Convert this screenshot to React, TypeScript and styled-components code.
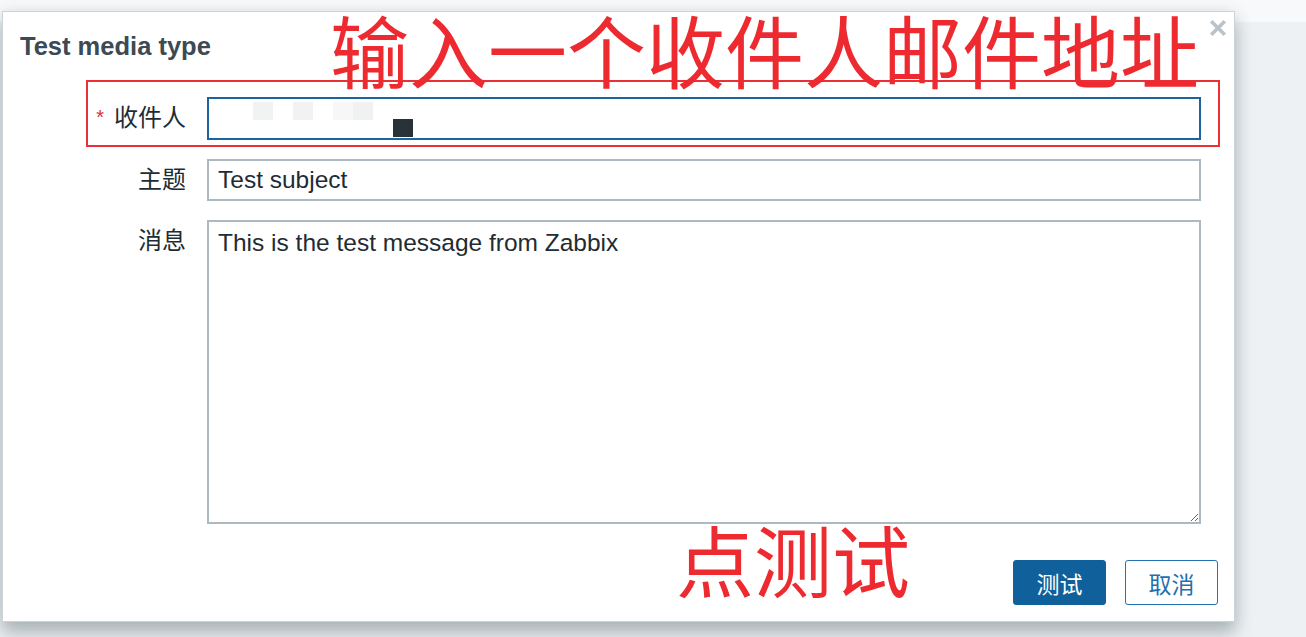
import styled, { createGlobalStyle } from "styled-components";

const GlobalStyle = createGlobalStyle`
  html, body {
    margin: 0;
    padding: 0;
    background: #eef1f3;
    font-family: "Liberation Sans", "Noto Sans CJK SC", Arial, sans-serif;
  }
`;

const CJK = `"Liberation Sans", "Noto Sans CJK SC", sans-serif`;

export default function App() {
  return (
    <>
      <GlobalStyle />
      <Page>
        <TopBar />
        <Dialog>
          <Header>
            <Title>Test media type</Title>
            <Close aria-label="close">
              <svg width="16" height="16" viewBox="0 0 16 16">
                <path d="M2.5 2.5 L13.5 13.5 M13.5 2.5 L2.5 13.5" stroke="#b9c3c9" strokeWidth="3.6" strokeLinecap="square" />
              </svg>
            </Close>
          </Header>

          <Form>
            <Label>
              <Req>*</Req>收件人
            </Label>
            <Field $focused>
              <Blot $w={20} $left={44} $top={3} $tone="#f1f2f2" />
              <Blot $w={20} $left={20} $top={3} $tone="#f1f2f2" />
              <Blot $w={20} $left={20} $top={3} $tone="#f7f7f7" />
              <Blot $w={20} $left={0} $top={3} $tone="#f0f1f1" />
              <Blot $w={20} $left={20} $top={20} $tone="#283339" />
            </Field>

            <Label>主题</Label>
            <Field>Test subject</Field>

            <Label>消息</Label>
            <Message readOnly defaultValue="This is the test message from Zabbix" />
          </Form>

          <Footer>
            <Button $primary>测试</Button>
            <Button>取消</Button>
          </Footer>

          <Highlight />
          <Note $left={327} $top={-3} $size={79}>输入一个收件人邮件地址</Note>
          <Note $left={673} $top={507} $size={78}>点测试</Note>
        </Dialog>
      </Page>
    </>
  );
}

const Page = styled.div`
  position: relative;
  width: 1306px;
  height: 637px;
  overflow: hidden;
`;

const TopBar = styled.div`
  height: 22px;
  background: #f8f9fa;
`;

const Dialog = styled.div`
  position: absolute;
  left: 2px;
  top: 11px;
  width: 1233px;
  height: 611px;
  box-sizing: border-box;
  border: 1px solid #cdd4d8;
  background: #ffffff;
  padding: 20px 16px 16px 17px;
  display: flex;
  flex-direction: column;
  box-shadow: 0 12px 16px rgba(50, 70, 80, 0.3), 0 0 16px rgba(50, 70, 80, 0.12);
`;

const Header = styled.div`
  display: flex;
  justify-content: space-between;
  align-items: flex-start;
`;

const Title = styled.h1`
  margin: 0;
  font-size: 25.5px;
  line-height: 28px;
  font-weight: 700;
  color: #3c4a54;
`;

const Close = styled.div`
  margin-top: -12px;
  margin-right: -8px;
  width: 16px;
  height: 16px;
  display: flex;
`;

const Form = styled.div`
  margin-top: 37px;
  display: grid;
  grid-template-columns: 166px 994px;
  grid-template-rows: 43px 42px 304px;
  column-gap: 21px;
  row-gap: 19px;
`;

const Label = styled.div`
  font-family: ${CJK};
  font-size: 24px;
  line-height: 42px;
  color: #1f2c33;
  text-align: right;
`;

const Req = styled.span`
  color: #e0302f;
  font-size: 20px;
  margin-right: 10px;
  position: relative;
  top: -2px;
`;

const Field = styled.div<{ $focused?: boolean }>`
  box-sizing: border-box;
  border: 2px solid ${(p) => (p.$focused ? "#1c63a0" : "#acb9c1")};
  padding: 0 9px;
  display: flex;
  align-items: flex-start;
  font-size: 24.5px;
  line-height: 38px;
  color: #1f2c33;
`;

const Blot = styled.span<{ $w: number; $left: number; $top: number; $tone: string }>`
  display: block;
  width: ${(p) => p.$w}px;
  height: 18px;
  margin-left: ${(p) => p.$left}px;
  margin-top: ${(p) => p.$top}px;
  background: ${(p) => p.$tone};
  &:first-child {
    margin-left: ${(p) => p.$left - 9}px;
  }
`;

const Message = styled.textarea`
  box-sizing: border-box;
  width: 100%;
  height: 100%;
  margin: 0;
  border: 2px solid #acb9c1;
  border-radius: 0;
  padding: 7px 9px;
  font-family: "Liberation Sans", Arial, sans-serif;
  font-size: 24.5px;
  line-height: 28px;
  color: #1f2c33;
  resize: vertical;
  outline: none;
`;

const Footer = styled.div`
  margin-top: auto;
  display: flex;
  justify-content: flex-end;
  gap: 19px;
`;

const Button = styled.button<{ $primary?: boolean }>`
  width: 93px;
  height: 45px;
  box-sizing: border-box;
  border-radius: 3px;
  border: 1.5px solid ${(p) => (p.$primary ? "#0f609b" : "#2272b2")};
  background: ${(p) => (p.$primary ? "#0f609b" : "#ffffff")};
  color: ${(p) => (p.$primary ? "#ffffff" : "#1f6fae")};
  font-family: ${CJK};
  font-size: 23px;
  padding: 0;
`;

const Highlight = styled.div`
  position: absolute;
  left: 83px;
  top: 68px;
  width: 1134px;
  height: 67px;
  box-sizing: border-box;
  border: 2px solid #ea3036;
  pointer-events: none;
`;

const Note = styled.div<{ $left: number; $top: number; $size: number }>`
  position: absolute;
  left: ${(p) => p.$left}px;
  top: ${(p) => p.$top}px;
  font-family: "Noto Sans CJK SC", sans-serif;
  font-size: ${(p) => p.$size}px;
  font-weight: 400;
  line-height: 1;
  color: #ee2a31;
  white-space: nowrap;
  pointer-events: none;
`;
